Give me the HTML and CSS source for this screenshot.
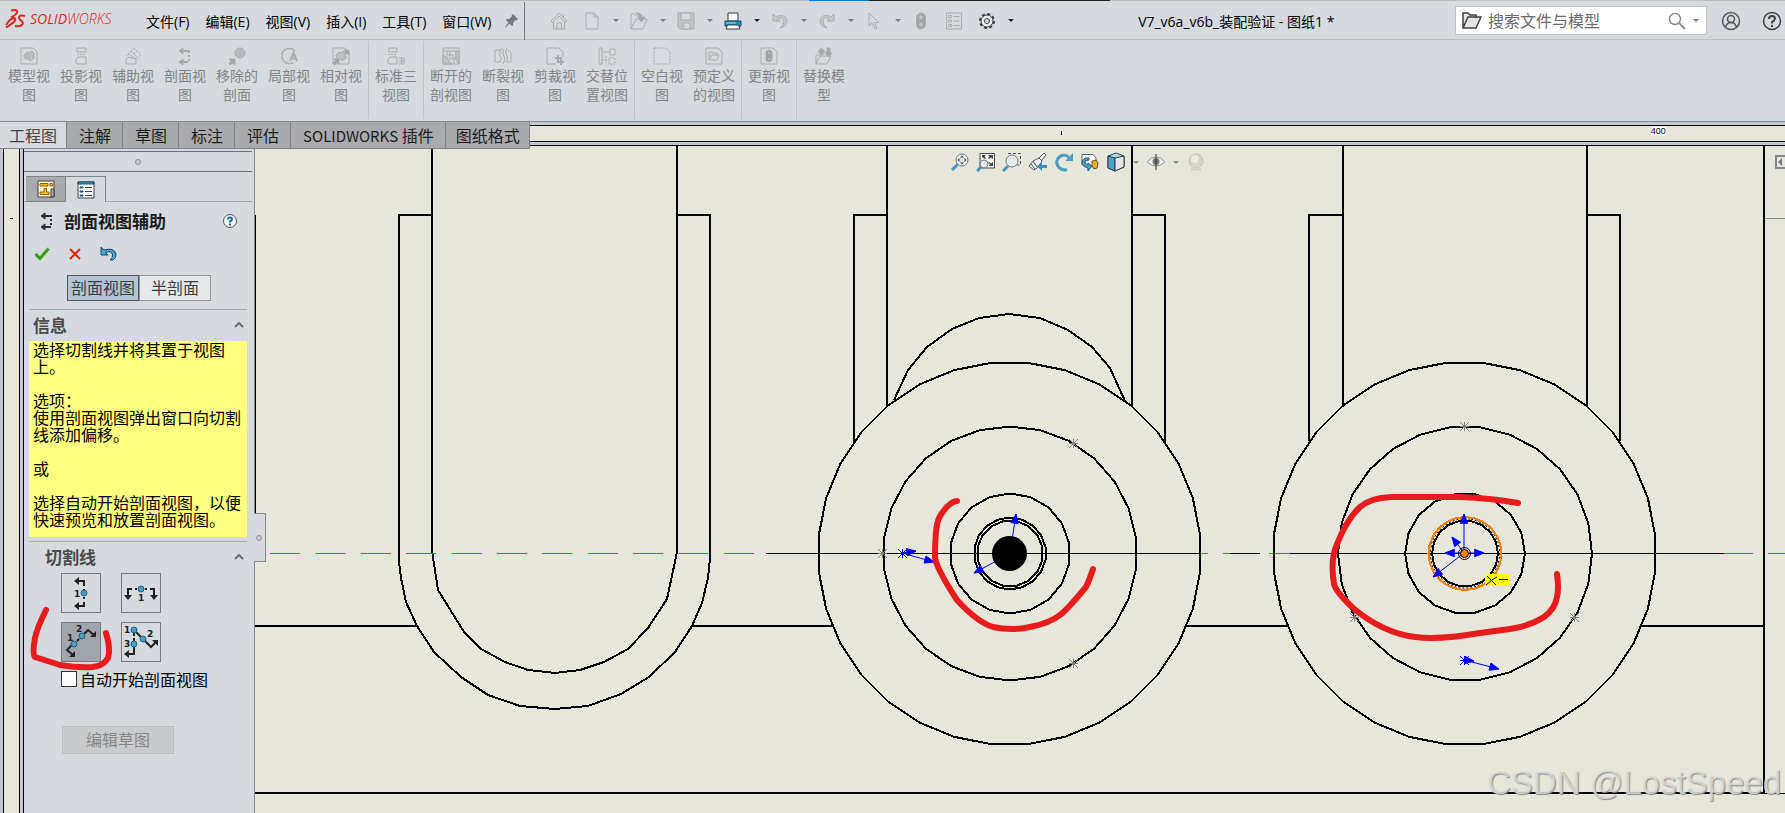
FILE: index.html
```html
<!DOCTYPE html>
<html lang="zh-CN">
<head>
    <meta charset="UTF-8">
    <meta name="viewport" content="width=device-width, initial-scale=1.0">
    <title>V7_v6a_v6b_装配验证 - 图纸1 *</title>
    <link rel="stylesheet" href="styles.css">
</head>
<body>
    <header class="titlebar">
        <div class="logo">
            <svg width="22" height="22" viewBox="0 0 22 22" fill="none" stroke="#da291c" stroke-width="2">
                <path d="M6 2.500Q13 1 12 4.500Q11 7 6 9.500M1 17Q6 9 10 10.500Q12 13 1 19.500"/>
                <path d="M20 8Q14 6.500 14 9.500Q14 11 16.500 13Q19.500 16 16 17.500Q14 18.500 10 18"/>
            </svg>
            <span class="logo-text"><b>SOLID</b>WORKS</span>
        </div>
        <nav class="menu">
            <button>文件(F)</button>
            <button>编辑(E)</button>
            <button>视图(V)</button>
            <button>插入(I)</button>
            <button>工具(T)</button>
            <button>窗口(W)</button>
        </nav>
        <button class="pin" aria-label="固定">
            <svg width="14" height="16" viewBox="0 0 14 16" fill="#77797c"><path d="M8 1L13 6L11.500 7.500L10.500 7L8 10L8 12.500L7 13L4.500 10.500L0 15L0 14L3.500 9.500L1 7L1.500 6H4L7 3.500L6.500 2.500Z"/></svg>
        </button>
        <div class="quick">
            <button class="single" aria-label="主页"><svg class="ic" viewBox="0 0 18 18"><path d="M1 9L9 1L17 9L15.500 10.500L9 4L2.500 10.500ZM3.500 10V17H14.500V10M7 17V11H11.500V17M13.500 5V2.500"/></svg></button>
            <button class="icon" aria-label="新建"><svg class="ic" viewBox="0 0 18 18"><path d="M3 1H11L15 5V17H3ZM11 1V5H15"/></svg></button>
            <button class="drop" aria-label="新建选项"></button>
            <button class="icon" aria-label="打开"><svg class="ic" viewBox="0 0 18 18"><path d="M1 17V2H5L6 4H9M1 17L6 7H17L13 17Z"/><path class="f" d="M6 1Q12 1 12 5H15L11.500 10L8 5H10Q10 3 6 1Z"/></svg></button>
            <button class="drop" aria-label="打开选项"></button>
            <button class="icon" aria-label="保存"><svg class="ic" viewBox="0 0 18 18"><path fill="#c3c5c8" d="M1 1H17V17H3L1 15Z"/><path fill="#d7dadf" d="M4 1H14V8H4ZM6 11H13V17H6ZM8 13V15"/></svg></button>
            <button class="drop" aria-label="保存选项"></button>
            <button class="icon" aria-label="打印"><svg width="18" height="18" viewBox="0 0 18 18" stroke="#37393c"><path fill="#fff" d="M4 9V1H14V9Z"/><path fill="#2b8db5" stroke="#0d4e72" d="M1 9H17V14H1Z"/><path stroke="#a4dcf0" d="M2 11H12"/><path fill="#fff" d="M3.500 13H14.500L16 17H2Z"/></svg></button>
            <button class="drop dark" aria-label="打印选项"></button>
            <button class="icon" aria-label="撤消"><svg class="ic" viewBox="0 0 18 18"><path fill="#c6c8cb" d="M2 2V9H9L6.500 6.500Q13 4 13 10Q13 13 9 16Q16 14 16 9Q15 1 4.500 4.500Z"/></svg></button>
            <button class="drop" aria-label="撤消选项"></button>
            <button class="icon" aria-label="重做"><svg class="ic" viewBox="0 0 18 18"><path fill="#c6c8cb" d="M16 2V9H9L11.500 6.500Q5 4 5 10Q5 13 9 16Q2 14 2 9Q3 1 13.500 4.500Z"/></svg></button>
            <button class="drop" aria-label="重做选项"></button>
            <button class="icon" aria-label="选择"><svg class="ic" viewBox="0 0 18 18"><path d="M4 1V14L7 11L10 17L12 16L9.500 10.500H14Z"/></svg></button>
            <button class="drop" aria-label="选择选项"></button>
            <button class="single" aria-label="重建模型"><svg class="ic" viewBox="0 0 18 18"><rect x="4.500" y="1" width="9" height="16" rx="4.500" fill="#a2a4a7"/><circle cx="9" cy="5.500" r="2" fill="#c9cbce"/><circle cx="9" cy="12.500" r="2" fill="#c9cbce"/></svg></button>
            <button class="single" aria-label="文件属性"><svg class="ic" viewBox="0 0 18 18"><path d="M1.500 1H16.500V17H1.500ZM3.500 3.500H6.500V5.500H3.500ZM3.500 8H6.500V10H3.500ZM3.500 12.500H6.500V14.500H3.500ZM8.500 4.500H14.500M8.500 9H14.500M8.500 13.500H14.500"/></svg></button>
            <button class="icon" aria-label="选项"><svg width="18" height="18" viewBox="0 0 18 18" fill="none" stroke="#3a3c3f"><circle cx="9" cy="9" r="7" stroke-width="2" stroke-dasharray="3 2.500"/><circle cx="9" cy="9" r="6" fill="#e9ebee"/><circle cx="9" cy="9" r="2.500"/></svg></button>
            <button class="drop dark" aria-label="选项菜单"></button>
        </div>
        <h1 class="doc-title">V7_v6a_v6b_装配验证 - 图纸1 *</h1>
        <div class="search">
            <svg width="20" height="18" viewBox="0 0 20 18" fill="#e4e5e7" stroke="#3e4043" stroke-width="1.500"><path d="M1 16V1H6L8 3H14V6M1 16L6 5H19L14 16Z"/></svg>
            <input type="text" placeholder="搜索文件与模型" aria-label="搜索文件与模型">
            <svg width="18" height="18" viewBox="0 0 18 18" fill="none" stroke="#8a8c8f" stroke-width="1.500"><circle cx="7" cy="7" r="5.500"/><path d="M11 11L17 17" stroke-width="2"/></svg>
            <button class="drop" aria-label="搜索选项"></button>
        </div>
        <div class="account">
            <button class="icon" aria-label="登录"><svg width="20" height="20" viewBox="0 0 20 20" fill="none" stroke="#55575a" stroke-width="1.500"><circle cx="10" cy="10" r="8.500"/><circle cx="10" cy="8" r="3.500"/><path d="M4.500 16Q6 11.500 10 11.500Q14 11.500 15.500 16"/></svg></button>
            <button class="icon" aria-label="帮助"><svg width="20" height="20" viewBox="0 0 20 20" fill="none" stroke="#3e4043" stroke-width="1.500"><circle cx="10" cy="10" r="8.500"/><path stroke-width="2" d="M7 8Q7 5 10 5Q13 5 13 7.500Q13 9 10 11V12.500M10 14V16"/></svg></button>
        </div>
    </header>

    <div class="ribbon">
        <div class="group">
            <button class="cmd"><svg class="ic" viewBox="0 0 18 18"><path d="M1 1H13L17 5V17H1Z"/><path fill="#bfc1c4" d="M4 8L7 5L9 6L12 4L14 6V11L10 14L9 12L5 12Z"/><circle cx="8" cy="9" r="2"/></svg>模型视图</button>
            <button class="cmd"><svg class="ic" viewBox="0 0 18 18"><path d="M5 1H14V5H5ZM4 16V12L6 10H14V17H5Z"/><path stroke-dasharray="2 1" d="M5 7.500H14"/></svg>投影视图</button>
            <button class="cmd"><svg class="ic" viewBox="0 0 18 18"><path d="M2 17V12L5 10L12 12V17Z"/><path stroke-dasharray="2 1" d="M4 7L10 1L17 8L13 12ZM7 4L14 11M10 7L13 4M2 9L4 7"/></svg>辅助视图</button>
            <button class="cmd"><svg class="ic" viewBox="0 0 18 18"><path stroke-width="2" d="M6 4H13V15H6" stroke-dasharray="9 2 2 2 2 2 12"/><path class="f" d="M3 4L7 1V7ZM3 15L7 12V18Z"/></svg>剖面视图</button>
            <button class="cmd"><svg class="ic" viewBox="0 0 18 18"><circle cx="12" cy="6" r="5" fill="#bbbdc0"/><path d="M8 9L15 2M10 11L17 4"/><path class="f" d="M1 12H7V18L5 16L2 18L1 17L3 14Z"/></svg>移除的剖面</button>
            <button class="cmd"><svg class="ic" viewBox="0 0 18 18"><path stroke-width="1.500" d="M15 4A7.500 7.500 0 1 0 13 15.500"/><path stroke-width="2" d="M10 14L13.500 6L17 14M11 11.500H16"/></svg>局部视图</button>
            <button class="cmd"><svg class="ic" viewBox="0 0 18 18"><path d="M1 1H13L17 5V17H1Z"/><path fill="#bfc1c4" d="M4 8L7 5L9 6L12 4L14 6V11L10 14L9 12L5 12Z"/><path class="f" d="M2 12H7V17L5.500 15.500L3 18L1 16L3.500 13.500ZM12 3H17V8L15 6L13 8L12 7L14 5Z"/></svg>相对视图</button>
        </div>
        <div class="group">
            <button class="cmd"><svg class="ic" viewBox="0 0 18 18"><path d="M2 1H10V5H2ZM1 16V12L3 10H10V17H2ZM12 11H17V17H12M14.500 11V17M12 14H17"/><path stroke-dasharray="2 1" d="M1 7.500H10"/></svg>标准三视图</button>
        </div>
        <div class="group">
            <button class="cmd"><svg class="ic" viewBox="0 0 18 18"><path d="M1 1H17V17H1ZM1 4H17M5 4V8H8V12H12V17M8 4V8H11V11H14V4"/><path fill="#c0c2c5" d="M1 8L5 10L7 14L10 17H1ZM14 4H17V17L14 13Z"/></svg>断开的剖视图</button>
            <button class="cmd"><svg class="ic" viewBox="0 0 18 18"><path d="M6 3H1V15H6Q9 12 6 9Q4 6 8 1M10 2Q7 6 10 9Q12 13 9 17M13 1Q10 5 13 9Q15 12 12 15H17V6L14 3"/></svg>断裂视图</button>
            <button class="cmd"><svg class="ic" viewBox="0 0 18 18"><path d="M10 17H1V1H13L17 5V10"/><path stroke-width="2" d="M12 8V15H18M9 11H15V18"/></svg>剪裁视图</button>
            <button class="cmd"><svg class="ic" viewBox="0 0 18 18"><path d="M1 1H4V17H1ZM12 2H17V8H12ZM4 5H12"/><path stroke-dasharray="2 1" d="M4 13H11M11 11H17V17H11ZM8 9V16"/></svg>交替位置视图</button>
        </div>
        <div class="group">
            <button class="cmd"><svg class="ic" viewBox="0 0 18 18"><path stroke-dasharray="2 1" d="M1 1H13L17 5V17H1Z"/></svg>空白视图</button>
            <button class="cmd"><svg class="ic" viewBox="0 0 18 18"><path d="M1 1H13L17 5V17H1ZM4 13V5H7L8 6H12V8M4 13L7 8H14L12 13Z"/></svg>预定义的视图</button>
        </div>
        <div class="group">
            <button class="cmd"><svg class="ic" viewBox="0 0 18 18"><path d="M1 1H13L17 5V17H1Z"/><rect x="6" y="3" width="6" height="12" rx="3" fill="#a2a4a7"/><path stroke="#d0d2d5" d="M8 6H10M8 12H10"/></svg>更新视图</button>
        </div>
        <div class="group last">
            <button class="cmd"><svg class="ic" viewBox="0 0 18 18"><path d="M1 17V8H4L5 9M1 17L5 9H16L12 17Z"/><path class="f" d="M5 8V5H3L6.500 1L10 5H8V8ZM12 1V6H10L13.500 10L17 6H15V1Z"/></svg>替换模型</button>
        </div>
    </div>

    <div class="tab-row">
        <nav class="tabs">
            <button class="active">工程图</button>
            <button>注解</button>
            <button>草图</button>
            <button>标注</button>
            <button>评估</button>
            <button><span class="latin">SOLIDWORKS</span> 插件</button>
            <button class="last">图纸格式</button>
        </nav>
        <div class="ruler-top">
            <div class="scale">
                <i class="tick"></i>
                <span class="mark">400</span>
            </div>
        </div>
    </div>

    <main class="workspace">
        <div class="ruler-left"><div class="scale"><i class="tick"></i></div></div>

        <aside class="panel">
            <div class="grip"><i class="dot"></i></div>
            <div class="panel-tabs">
                <button aria-label="特征树"><svg width="18" height="18" viewBox="0 0 18 18" stroke="#3d3f42"><path fill="#fff8dc" d="M1 1H17V17H1Z"/><path fill="#f6c21c" stroke="#8a6500" d="M3 3.500H11V6H3ZM13 3.500H15.500V6H13ZM7 8.500H9.500V12H12V14.500H3V12H7Z"/><path fill="#aaacaf" d="M14 9H17V17H14Z"/></svg></button>
                <button class="active" aria-label="属性"><svg width="18" height="18" viewBox="0 0 18 18" stroke="#3d3f42"><path fill="#fff" d="M1 1H17V17H1Z"/><path fill="#3a9cc4" stroke="#0e4f70" d="M1 1H17V3H1ZM3 6H6V7H3ZM3 10H6V11H3ZM3 14H6V15H3Z"/><path d="M8 6.500H15M8 10.500H15M8 14.500H15"/></svg></button>
            </div>
            <div class="panel-title">
                <svg width="18" height="18" viewBox="0 0 18 18" fill="none" stroke="#2c2e31"><path stroke-width="2" stroke-dasharray="9 2 2 2 2 2 12" d="M6 4H14V15H6"/><path fill="#2c2e31" d="M4 4L8 1V7ZM4 15L8 12V18Z"/></svg>
                <h2>剖面视图辅助</h2>
                <button class="help" aria-label="帮助"><svg width="16" height="16" viewBox="0 0 16 16" fill="none" stroke="#55575a"><circle cx="8" cy="8" r="6.500" fill="#eef0f2"/><path stroke="#1a6fa8" stroke-width="2" d="M6 6.500Q6 4.500 8 4.500Q10 4.500 10 6Q10 7.500 8 8.500V9.500M8 10.500V12.500"/></svg></button>
            </div>
            <div class="panel-actions">
                <button aria-label="确定"><svg width="16" height="14" viewBox="0 0 16 14" fill="none" stroke="#35a010" stroke-width="3"><path d="M1.500 7L6 11.500L14.500 1.500"/></svg></button>
                <button aria-label="取消"><svg width="12" height="12" viewBox="0 0 12 12" fill="none" stroke="#e02200" stroke-width="2"><path d="M1 1L11 11M11 1L1 11"/></svg></button>
                <button aria-label="撤消"><svg width="18" height="16" viewBox="0 0 18 16" fill="#4fa3c7" stroke="#0e4f70"><path d="M1 1V9H8L5.500 6.500Q12 4 12.500 9Q13 12 10 14H13Q16.500 12 16 8Q14 1 4 4Z"/></svg></button>
            </div>
            <div class="switch">
                <button class="active">剖面视图</button>
                <button>半剖面</button>
            </div>

            <section class="info">
                <h3>信息<svg class="caret" width="10" height="6" viewBox="0 0 10 6"><path d="M1 5L5 1L9 5"/></svg></h3>
                <p class="message">选择切割线并将其置于视图上。

选项：
使用剖面视图弹出窗口向切割线添加偏移。

或

选择自动开始剖面视图，以便快速预览和放置剖面视图。</p>
            </section>

            <section class="cutting">
                <h3>切割线<svg class="caret" width="10" height="6" viewBox="0 0 10 6"><path d="M1 5L5 1L9 5"/></svg></h3>
                <div class="line-types">
                    <button aria-label="竖直"><svg width="36" height="36" viewBox="0 0 36 36"><path class="cut" d="M14 6H21V11M21 14V16M21 22V24M21 27V31H14"/><path class="head" d="M11 6L16 2V10ZM11 31L16 27V35Z"/><circle class="node" cx="21" cy="18" r="3"/><text x="11" y="22">1</text></svg></button>
                    <button aria-label="水平"><svg width="36" height="36" viewBox="0 0 36 36"><path class="cut" d="M5 22V14H9M12 14H14M22 14H24M27 14H31V22"/><path class="head" d="M5 25L1 20H9ZM31 25L27 20H35Z"/><circle class="node" cx="18" cy="14" r="3"/><text x="15" y="26">1</text></svg></button>
                    <button class="active" aria-label="辅助视图"><svg width="36" height="36" viewBox="0 0 36 36"><path class="cut" d="M10 31L4 26L9 21M14 17L16 15M21 10L25 6L31 11"/><path class="head" d="M12 33V27L6 33ZM33 13V7L27 13Z"/><circle class="node" cx="11" cy="20" r="3"/><circle class="node" cx="19" cy="12" r="3"/><text x="4" y="17">1</text><text x="13" y="8">2</text></svg></button>
                    <button aria-label="对齐"><svg width="36" height="36" viewBox="0 0 36 36"><path class="cut" d="M11 9V12M11 14V17M11 23V30H5M13 8L18 13M22 17L28 23L33 18"/><path class="head" d="M1 30L6 26V34ZM35 16H29L35 22Z"/><circle class="node" cx="11" cy="6" r="3"/><circle class="node" cx="20" cy="15" r="3"/><circle class="node" cx="11" cy="20" r="3"/><text x="1" y="9">1</text><text x="24" y="13">2</text><text x="1" y="23">3</text></svg></button>
                </div>
                <label class="auto"><input type="checkbox">自动开始剖面视图</label>
                <button class="edit" disabled>编辑草图</button>
            </section>
            <button class="splitter" aria-label="折叠面板"><i class="dot"></i></button>
            <svg class="pen-note" width="90" height="70" viewBox="0 0 90 70"><path class="pen" d="M20 6Q11 24 9 34Q6 51 9 53L34 61Q52 64 67 63Q77 62 82 54Q85 45 80 29"/></svg>
        </aside>

        <div class="sheet">
            <svg class="drawing" width="100%" height="100%">
                <g transform="translate(-255 -149)">
                    <path class="thin" d="M255.500 215V513" stroke="#000"/>
                    <path class="thin" d="M1763 218.500H1900" stroke="#85878a"/>
                    <!-- slot -->
                    <path class="edge" d="M432 149V551L438 590L464 632L481 649L505 662L528 670L555 673L580 670L604 662L628 649L648 628L667 599L677 552V146"/>
                    <path class="edge" d="M432 215H399V562L401 578L406 602L417 626L434 652L461 677L488 695L520 706L555 709L588 706L621 694L649 677L675 652L692 626L702 603L708 578L710 558V215H677"/>
                    <!-- wheel brackets -->
                    <path class="edge" d="M887 146V406M887 215H854V443M1132 146V406M1132 215H1165V443"/>
                    <path class="edge" d="M1343 146V407M1343 215H1309V441M1587 146V407M1587 215H1620V441"/>
                    <path class="edge" d="M894 400L908 370L927 347L952 329L979 318L1009 314L1040 318L1068 330L1092 347L1110 368L1125 401"/>
                    <path class="edge" d="M255 626H417M692 626H833M1186 626H1288M1642 626H1764M1764 146V793M255 793H1764"/>
                    <path class="thin" d="M1764 793.500H1900" stroke="#000"/>
                    <!-- centre line -->
                    <path class="thin" stroke="#f0f" stroke-dasharray="30 15.400" d="M270 553.500H755"/>
                    <path class="thin" stroke="#000" d="M766 553.500H1200M1230 553.500H1260M1290 553.500H1724"/>
                    <path class="thin" stroke="#f0f" d="M1200 553.500H1208M1223 553.500H1230M1269 553.500H1290M1724 553.500H1753M1768 553.500H1798"/>
                    <g id="wheels"></g>
                    <g id="stars"></g>
                    <g id="arrows"></g>
                    <circle cx="1009.500" cy="553.500" r="17.500"/>
                    <circle cx="1464.500" cy="553.500" r="6" fill="none" stroke="#000"/>
                    <circle cx="1464.500" cy="553.500" r="4" fill="#ff8000" stroke="#000"/>
                    <path fill="#ff0" d="M1485 574H1509V586H1485Z"/>
                    <path fill="none" stroke="#000" d="M1487 576L1496 585M1486 585L1492 580L1497 577M1499 579.500H1508"/>
                    <path class="pen" d="M957 501Q948 502 939 518Q935 527 935 557Q936 568 957 600Q977 622 993 627Q1012 631 1030 627Q1050 623 1060 615Q1066 611 1086 587Q1089 581 1093 569"/>
                    <path class="pen" d="M1518 503Q1490 498 1460 497H1391Q1370 498 1360 507Q1347 519 1337 544Q1330 560 1334 584Q1336 592 1353 608Q1383 633 1415 637Q1440 640 1480 633L1510 629Q1530 626 1544 617Q1555 609 1557 597Q1559 588 1557 574"/>
                </g>
            </svg>
            <div class="view-tools">
                <button aria-label="放大"><svg width="20" height="20" viewBox="0 0 20 20"><path stroke="#4d92b5" stroke-width="3" d="M2 18L8 12"/><circle class="lens" cx="12" cy="8" r="6"/><path class="f" d="M12 3.500L14 5.500H10ZM12 12.500L14 10.500H10ZM7.500 8L9.500 6V10ZM16.500 8L14.500 6V10Z"/></svg></button>
                <button aria-label="整屏显示全图"><svg width="20" height="20" viewBox="0 0 20 20"><path fill="#f3f3ee" stroke="#4a4c4f" d="M4 1.500H18.500V16H4Z"/><path class="f" d="M6 3H10L8.500 4.500L10 6L9 7L6 5ZM17 3V7L15 5.500L13 7L12 6L13.500 4.500L12 3ZM17 14H13L14 12L12 11L13 10L15 11.500L17 10Z"/><path stroke="#4d92b5" stroke-width="3" d="M1 19L5 15"/><circle class="lens" cx="8" cy="12" r="4"/></svg></button>
                <button aria-label="局部放大"><svg width="20" height="20" viewBox="0 0 20 20"><path fill="none" stroke="#4a4c4f" stroke-dasharray="3 2" d="M6 1.500H18.500V13H15"/><path stroke="#4d92b5" stroke-width="3" d="M1 19L6 14"/><circle class="lens" cx="10" cy="9" r="6"/></svg></button>
                <button aria-label="上一视图"><svg width="20" height="20" viewBox="0 0 20 20"><path fill="#f0f0ec" stroke="#55575a" d="M1 14L5 9L11 6L16 1L18 3L14 8L12 14L6 18Z"/><path fill="none" stroke="#55575a" d="M5 9L9 15M11 6L14 9M3 12L7 17"/><path fill="#3a8fb8" d="M9 14L14 10V13H19V16H14V19Z"/></svg></button>
                <button aria-label="旋转"><svg width="20" height="20" viewBox="0 0 20 20"><path fill="none" stroke="#4d9bbd" stroke-width="3" d="M13 17.500Q9 19 5 15.500Q1 11 4 6.500Q8 1 15 5"/><path fill="#4d9bbd" d="M19 1V9H11Z"/></svg></button>
                <button aria-label="3D 工程图视图"><svg width="20" height="20" viewBox="0 0 20 20"><path fill="#fff" stroke="#65676a" d="M2 13V2.500H13L16 6V13"/><path fill="#4d9bbd" stroke="#1f617f" d="M5 6L2 9Q1 14 8 16V19L12 14L8 11V13Q4 12 5 9L9 8V6Z"/><path fill="#e8ae24" stroke="#6b5518" d="M12 9L16 8L18 11L17 16L14 17L12 14Z"/></svg></button>
                <button aria-label="显示样式"><svg width="20" height="20" viewBox="0 0 20 20" stroke="#2f3a40"><path fill="#aadcf0" d="M2 4L10 1L18 4V15L9 19L2 16Z"/><path fill="#4aa3c8" d="M2 4L9 6V19L2 16Z"/><path fill="#e4e6e6" d="M9 6L18 4V15L9 19Z"/></svg></button>
                <button class="drop" aria-label="显示样式选项"></button>
                <button aria-label="隐藏/显示项目"><svg width="20" height="20" viewBox="0 0 20 20"><path fill="#fbfbf8" stroke="#8d8f8c" d="M1 10Q10 0 19 10Q10 18 1 10Z"/><circle cx="10" cy="9.500" r="3.500" fill="#777"/><path stroke="#333" d="M10 2V18"/></svg></button>
                <button class="drop" aria-label="隐藏选项"></button>
                <button aria-label="外观"><svg width="20" height="20" viewBox="0 0 20 20"><circle cx="10" cy="9" r="7" fill="#d4d4ca" stroke="#c4c4ba"/><circle cx="9" cy="7" r="4" fill="#ebebe3"/><path stroke="#cecec4" stroke-width="2" d="M5 17.500H15"/></svg></button>
            </div>
            <button class="task-pane" aria-label="展开任务窗格"><svg width="14" height="14" viewBox="0 0 14 14"><path fill="none" stroke="#85878a" stroke-width="2" d="M14 1H1V13H14"/><path fill="#77797c" d="M3 7L7 3V11Z"/></svg></button>
            <div class="watermark">CSDN @LostSpeed</div>
        </div>
    </main>

    <script>
        const NS = 'http://www.w3.org/2000/svg';

        function addShape(parent, tag, attrs) {
            const el = document.createElementNS(NS, tag);
            for (const key in attrs) {
                el.setAttribute(key, attrs[key]);
            }
            document.getElementById(parent).appendChild(el);
        }

        // circles are drawn as facets; half = flat side on top
        function facets(cx, cy, r, n, half) {
            const points = [];
            for (let i = 0; i < n; i++) {
                const a = 2 * Math.PI * (i + (half ? 0.5 : 0)) / n;
                points.push((cx + r * Math.sin(a)).toFixed(1) + ',' + (cy - r * Math.cos(a)).toFixed(1));
            }
            return points.join(' ');
        }

        const circles = [
            [1009.5, 553.5, 191.5, 32, true, 'edge'],
            [1010, 553.5, 127, 26, false, 'edge'],
            [1010, 553.5, 60, 18, false, 'edge'],
            [1010, 553.5, 36, 18, false, 'edge'],
            [1010, 553.5, 33, 16, true, 'edge'],
            [1464.5, 553.5, 191.5, 32, true, 'edge'],
            [1465, 553.5, 127, 26, true, 'edge'],
            [1465, 553.5, 60, 18, true, 'edge'],
            [1465, 553.5, 33, 18, true, 'edge'],
            [1465, 553.5, 35, 18, true, 'dots'],
            [1465, 553.5, 36.5, 24, false, 'edge picked']
        ];
        circles.forEach(([cx, cy, r, n, half, cls]) => {
            addShape('wheels', 'polygon', { points: facets(cx, cy, r, n, half), class: cls });
        });

        const stars = [
            [1073, 443, 'gray'], [1073, 663, 'gray'], [882, 553, 'gray'], [902, 553, 'blue'],
            [1464, 426, 'gray'], [1354, 617, 'gray'], [1574, 617, 'gray'], [1464, 660, 'blue']
        ];
        stars.forEach(([x, y, color]) => {
            addShape('stars', 'path', {
                d: `M${x - 4} ${y - 4}l9 9m0 -9l-9 9M${x + 0.5} ${y - 4}v9M${x - 4} ${y + 0.5}h9`,
                stroke: color, fill: 'none'
            });
        });

        // from x, from y, to x, to y
        const arrows = [
            [902, 553, 916, 551], [902, 553, 934, 562], [1012, 540, 1016, 514], [1000, 559, 974, 573],
            [1464, 553, 1464, 514], [1464, 553, 1452, 537], [1464, 553, 1484, 553], [1464, 553, 1445, 553],
            [1464, 553, 1433, 577], [1464, 660, 1474, 661], [1464, 660, 1499, 669]
        ];
        arrows.forEach(([x1, y1, x2, y2]) => {
            const a = Math.atan2(y2 - y1, x2 - x1);
            const wing = side => `${x2 - 10 * Math.cos(a + side)} ${y2 - 10 * Math.sin(a + side)}`;
            addShape('arrows', 'path', {
                d: `M${x1} ${y1}L${x2} ${y2}L${wing(0.38)}L${wing(-0.38)}L${x2} ${y2}`,
                stroke: 'blue', fill: 'blue'
            });
        });
    </script>
</body>
</html>
```
FILE: styles.css
```css
* {
    box-sizing: border-box;
}

body {
    margin: 0;
    height: 100vh;
    display: flex;
    flex-direction: column;
    overflow: hidden;
    font-family: "Open Sans", "Noto Sans CJK SC", sans-serif;
    font-size: 16px;
    background-color: #d6dadf;
    color: #000;
}

button {
    font: inherit;
    color: inherit;
    margin: 0;
    padding: 0;
    border: none;
    background: none;
    white-space: nowrap;
}

svg {
    display: block;
    flex: none;
}

h1, h2, h3, p {
    margin: 0;
}

.ic {
    width: 18px;
    height: 18px;
    fill: none;
    stroke: #a9abae;
}

.ic .f {
    fill: #a4a6a9;
}

/* title bar */
.titlebar {
    display: flex;
    align-items: center;
    height: 40px;
    flex: none;
    border-top: 1px solid #bdbdbd;
    border-image: linear-gradient(to right, #bdbdbd 809px, #0078d4 809px, #0078d4 869px, #222 869px, #222 1110px, #bdbdbd 1110px) 1 0 0 0;
    box-shadow: inset 0 -1px #bfbfbf;
    font-size: 14px;
}

.logo {
    display: flex;
    align-items: center;
    gap: 3px;
    width: 138px;
    padding: 0 0 4px 5px;
    color: #da291c;
}

.logo-text {
    font-size: 14px;
    font-style: italic;
    font-weight: 300;
}

.menu {
    display: flex;
}

.menu button {
    padding: 0 8px;
}

.pin {
    display: flex;
    align-items: center;
    justify-content: center;
    flex: none;
    width: 26px;
    height: 38px;
    border-right: 1px solid #77797c;
}

.quick {
    display: flex;
    align-items: center;
    padding-left: 22px;
}

.icon, .single {
    width: 24px;
    height: 24px;
    padding: 0 3px;
    flex: none;
}

.single {
    width: 33px;
}

.drop {
    display: flex;
    justify-content: center;
    align-items: center;
    width: 23px;
    height: 24px;
    flex: none;
}

.drop::after {
    content: "";
    border: 3px solid transparent;
    border-top-color: #77797c;
    border-bottom: none;
}

.drop.dark::after {
    border-top-color: #222;
}

.doc-title {
    flex: 1;
    padding-right: 5px;
    text-align: center;
    font-size: 14px;
    font-weight: normal;
    white-space: nowrap;
}

.search {
    display: flex;
    align-items: center;
    width: 252px;
    height: 29px;
    padding-left: 6px;
    background-color: #fff;
    border: 1px solid #bfc1c4;
}

.search input {
    flex: 1;
    min-width: 0;
    border: none;
    outline: none;
    padding: 0 0 0 6px;
    font: inherit;
    font-size: 16px;
    background: none;
}

.search input::placeholder {
    color: #6b6b6b;
}

.search .drop {
    width: 20px;
}

.account {
    display: flex;
    gap: 17px;
    padding: 0 1px 0 12px;
}

.account .icon {
    padding: 0 2px;
}

/* ribbon */
.ribbon {
    display: flex;
    height: 82px;
    flex: none;
    padding: 1px 0 2px 2px;
    border-bottom: 1px solid #85878a;
}

.group {
    display: flex;
    padding: 0 1px;
    border-right: 1px solid #c0c3c6;
}

.group.last {
    border-right: none;
}

.cmd {
    display: flex;
    flex-direction: column;
    align-items: center;
    gap: 1px;
    width: 52px;
    padding: 6px 5px 0;
    font-size: 14px;
    line-height: 19px;
    color: #838588;
    white-space: normal;
    word-break: break-all;
}

/* tabs and rulers */
.tab-row {
    display: flex;
    height: 27px;
    flex: none;
}

.tabs {
    display: flex;
    font-family: "Noto Sans CJK SC", sans-serif;
}

.tabs button {
    padding: 0 11px 1px 12px;
    border-right: 1px solid #808285;
    border-bottom: 1px solid #808285;
    background-color: #a8aaae;
    color: #1c1c1c;
}

.tabs .active {
    padding: 0 9px;
    background-color: #d6dadf;
    color: #444;
}

.tabs .last {
    padding: 0 9px 1px 10px;
}

.tabs .latin {
    font-size: 15px;
}

.ruler-top {
    flex: 1;
    padding-top: 3px;
    border-bottom: 3px solid #e6e6da;
    background: linear-gradient(#c4c8d6 23px, #000 23px);
    height: 27px;
}

.ruler-top .scale {
    display: flex;
    height: 17px;
    border: solid #000;
    border-width: 1px 0;
    background-color: #e6e6da;
}

.ruler-top .tick {
    width: 1px;
    height: 4px;
    margin: 5px 0 0 531px;
    background-color: #000;
}

.ruler-top .mark {
    height: 9px;
    margin: 1px 0 0 589px;
    background-color: #fff;
    font: 9px/9px "Liberation Sans", sans-serif;
}

.workspace {
    display: flex;
    flex: 1;
    min-height: 0;
}

.ruler-left {
    width: 24px;
    flex: none;
    padding: 0 3px;
    border-right: 1px solid #000;
    background-color: #c4c8d6;
}

.ruler-left .scale {
    height: 100%;
    padding: 69px 0 0 6px;
    border: solid #000;
    border-width: 0 1px;
    background-color: #e6e6da;
}

.ruler-left .tick {
    display: block;
    width: 3px;
    height: 1px;
    background-color: #000;
}

/* property panel */
.panel {
    position: relative;
    z-index: 1;
    width: 231px;
    flex: none;
    border-right: 1px solid #85878a;
    background-color: #d6dadf;
}

.dot {
    width: 6px;
    height: 6px;
    border: 1px solid #909295;
    border-radius: 50%;
    background-color: #c9cbce;
}

.grip {
    display: flex;
    align-items: center;
    justify-content: center;
    height: 21px;
    margin: 2px 2px 0 0;
    border: solid #6c6f7c;
    border-width: 1px 0;
}

.panel-tabs {
    display: flex;
    height: 30px;
    margin-right: 2px;
    padding: 4px 0 0 2px;
    border-bottom: 1px solid #a7a9ac;
}

.panel-tabs button {
    width: 40px;
    height: 26px;
    padding: 3px 11px;
    border: 1px solid #808285;
    border-left: none;
    background-color: #a8aaae;
}

.panel-tabs .active {
    border-bottom: none;
    background-color: #d6dadf;
}

.panel-title {
    display: flex;
    align-items: center;
    height: 38px;
    padding: 0 16px 0 13px;
    gap: 9px;
}

.panel-title h2 {
    padding-bottom: 2px;
    font-size: 17px;
    color: #1c1c1c;
}

.help {
    margin-left: auto;
}

.panel-actions {
    display: flex;
    align-items: center;
    height: 28px;
    padding-left: 10px;
    gap: 19px;
}

.switch {
    display: flex;
    width: 144px;
    height: 26px;
    margin: 7px 0 8px 43px;
}

.switch button {
    flex: 1;
    border: 1px solid #909295;
    background-color: #e6e8ec;
    line-height: 24px;
    color: #3c3c3c;
}

.switch .active {
    border-color: #55575a;
    background-color: #b4c3d3;
}

.panel section {
    margin: 0 7px 0 5px;
    border-top: 1px solid #a7a9ac;
}

.panel h3 {
    display: flex;
    align-items: center;
    justify-content: space-between;
    height: 31px;
    padding: 0 3px 2px 4px;
    font-size: 17px;
    color: #4a4a4a;
}

.caret {
    fill: none;
    stroke: #6b6d70;
    stroke-width: 2;
}

.message {
    padding: 1px 2px 8px 4px;
    margin-bottom: 4px;
    background-color: #ffff80;
    line-height: 17px;
    white-space: pre-line;
}

.panel .cutting h3 {
    padding-left: 16px;
}

.line-types {
    display: grid;
    grid-template-columns: 40px 40px;
    gap: 9px 20px;
    padding-left: 32px;
}

.line-types button {
    height: 40px;
    padding: 1px;
    border: 1px solid #77797c;
}

.line-types .active {
    background-color: #a0a5ac;
}

.line-types text {
    font: bold 9px "DejaVu Sans", sans-serif;
    fill: #222;
}

.cut {
    fill: none;
    stroke: #222;
    stroke-width: 2;
}

.head {
    fill: #222;
}

.node {
    fill: #4a9cc0;
    stroke: #1d5f80;
}

.auto {
    display: flex;
    align-items: center;
    gap: 3px;
    height: 24px;
    margin: 5px 0 35px 32px;
}

.auto input {
    appearance: none;
    width: 16px;
    height: 16px;
    margin: 0;
    border: 1px solid #333;
    background-color: #fff;
}

.edit {
    display: block;
    width: 112px;
    height: 28px;
    margin-left: 33px;
    border: 1px solid #b9bbbe;
    background-color: #c9cacc;
    line-height: 26px;
    color: #85878a;
}

.splitter {
    position: absolute;
    top: 364px;
    left: 230px;
    display: flex;
    align-items: center;
    padding-left: 2px;
    width: 12px;
    height: 49px;
    border: 1px solid #85878a;
    border-left: none;
    background-color: #d6dadf;
}

.pen-note {
    position: absolute;
    top: 455px;
    left: 2px;
    pointer-events: none;
}

.pen {
    fill: none;
    stroke: #e81c1c;
    stroke-width: 6;
    stroke-linecap: round;
    stroke-linejoin: round;
}

/* drawing sheet */
.sheet {
    position: relative;
    flex: 1;
    min-width: 0;
    background-color: #e6e6da;
}

.drawing {
    overflow: visible;
}

.edge {
    fill: none;
    stroke: #000;
    stroke-width: 2;
    shape-rendering: crispEdges;
}

.picked {
    stroke: #ff8000;
}

.dots {
    fill: none;
    stroke: #000;
    stroke-dasharray: 2 2;
}

.thin {
    fill: none;
    stroke-width: 1;
}

.view-tools {
    position: absolute;
    top: 3px;
    left: 695px;
    display: flex;
    gap: 6px;
}

.view-tools .drop {
    width: 8px;
    height: 20px;
}

.view-tools .drop::after {
    border-top-color: #8d8f8c;
}

.lens {
    fill: #e3ecec;
    stroke: #77797c;
}

.view-tools .f {
    fill: #44464a;
}

.task-pane {
    position: absolute;
    top: 6px;
    right: -4px;
}

.watermark {
    position: absolute;
    right: 4px;
    bottom: 10px;
    font: 33px/40px "Liberation Sans", sans-serif;
    color: rgba(225, 225, 225, 0.8);
    text-shadow: 1px 1px 1px #8a8a85;
}
```
